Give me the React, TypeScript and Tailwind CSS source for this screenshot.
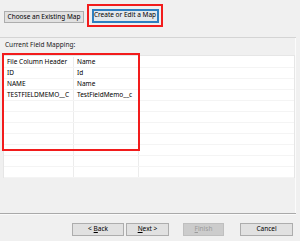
import React from "react";

const rows = [
  ["File Column Header", "Name"],
  ["ID", "Id"],
  ["NAME", "Name"],
  ["TESTFIELDMEMO__C", "TestFieldMemo__c"],
  ["", ""],
  ["", ""],
  ["", ""],
  ["", ""],
  ["", ""],
  ["", ""],
  ["", ""],
];

const App = () => {
  return (
    <div
      className="relative w-[300px] h-[241px] bg-[#f0f0f0] flex flex-col text-[6.5px] leading-none text-black overflow-hidden"
      style={{ fontFamily: '"Noto Sans", "Open Sans", sans-serif' }}
    >
      {/* top choice buttons */}
      <div className="h-[37px] flex items-start pl-[4px]">
        <button className="mt-[11px] w-[80px] h-[12px] border border-[#adadad] bg-[#e1e1e1] flex items-center justify-center whitespace-nowrap">
          Choose an Existing Map
        </button>
        <div className="ml-[3px] mt-[4px] w-[76px] h-[23px] border-2 border-[#f21c1c] flex items-center justify-center">
          <button className="w-[67px] h-[14px] border-2 border-[#2f7fc0] bg-[#e3e8ec] flex items-center justify-center whitespace-nowrap">
            Create or Edit a Map
          </button>
        </div>
      </div>

      <div className="w-[296px] h-px bg-[#d4d4d4]" />

      {/* mapping panel */}
      <div className="relative w-[296px] h-[175px] border-r border-[#fbfbfb]">
        <div className="pl-[5px] pt-[4px] h-[17px] text-[#1a1a1a]">Current Field Mapping:</div>
        <div className="ml-[3px] w-[292px] h-[123px] bg-white border border-[#e6e6e6] pt-[1px]">
          {rows.map((row, index) => (
            <div key={index} className="flex h-[11px] border-b border-[#f4f4f4]">
              <div className="w-[70px] pl-[3px] flex items-center border-r border-[#ececec] whitespace-nowrap overflow-hidden">
                {row[0]}
              </div>
              <div className="w-[65px] pl-[3px] flex items-center border-r border-[#ececec] whitespace-nowrap overflow-hidden">
                {row[1]}
              </div>
              <div className="flex-1" />
            </div>
          ))}
        </div>
        <div className="absolute left-[2px] top-[15px] w-[138px] h-[98px] border-2 border-[#f21c1c]" />
      </div>

      <div className="w-[296px] h-px bg-[#a9a9a9]" />
      <div className="w-[296px] h-px bg-[#fafafa]" />

      {/* wizard buttons */}
      <div className="flex items-start pt-[8px] pl-[72px]">
        <button className="w-[52px] h-[13px] border border-[#adadad] bg-[#e1e1e1] flex items-center justify-center whitespace-nowrap">
          &lt; <span className="underline ml-[2px]">B</span>ack
        </button>
        <button className="ml-[2px] w-[43px] h-[13px] border border-[#adadad] bg-[#e1e1e1] flex items-center justify-center whitespace-nowrap">
          <span className="underline">N</span>ext &gt;
        </button>
        <button className="ml-[14px] w-[41px] h-[13px] border border-[#bfbfbf] bg-[#cccccc] text-[#9a9a9a] flex items-center justify-center whitespace-nowrap">
          <span className="underline">F</span>inish
        </button>
        <button className="ml-[16px] w-[53px] h-[13px] border border-[#adadad] bg-[#e1e1e1] flex items-center justify-center whitespace-nowrap">
          Cancel
        </button>
      </div>
    </div>
  );
};

export default App;
